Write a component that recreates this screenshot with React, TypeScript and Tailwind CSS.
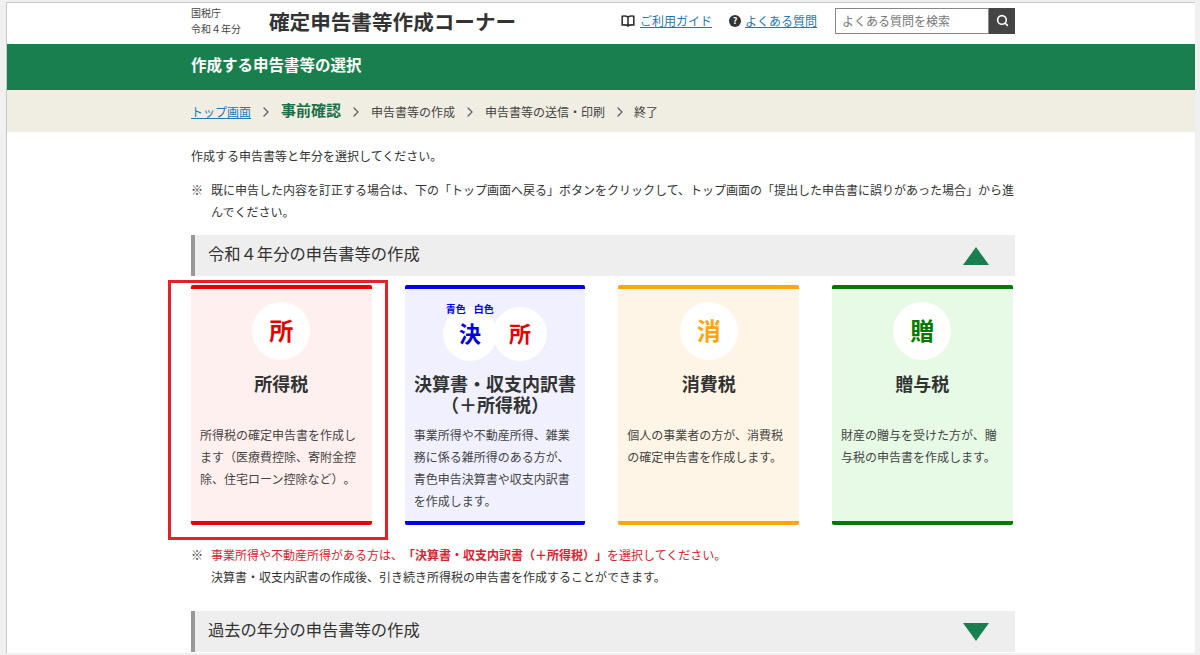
import { ChevronRight, Search } from "lucide-react";

const font = "font-['Noto_Sans_CJK_JP','Liberation_Sans',sans-serif]";

const cards = [
  {
    title: ["所得税"],
    text: "所得税の確定申告書を作成します（医療費控除、寄附金控除、住宅ローン控除など）。",
    bg: "bg-[#fff0f0]",
    bar: "bg-[#e60000]",
    badge: "所",
    badgeColor: "text-[#e60000]",
  },
  {
    title: ["決算書・収支内訳書", "（＋所得税）"],
    text: "事業所得や不動産所得、雑業務に係る雑所得のある方が、青色申告決算書や収支内訳書を作成します。",
    bg: "bg-[#f0f0ff]",
    bar: "bg-[#0000e6]",
    badge: "",
    badgeColor: "",
  },
  {
    title: ["消費税"],
    text: "個人の事業者の方が、消費税の確定申告書を作成します。",
    bg: "bg-[#fff5e6]",
    bar: "bg-[#ffa50f]",
    badge: "消",
    badgeColor: "text-[#ffa50f]",
  },
  {
    title: ["贈与税"],
    text: "財産の贈与を受けた方が、贈与税の申告書を作成します。",
    bg: "bg-[#e6fae6]",
    bar: "bg-[#007a00]",
    badge: "贈",
    badgeColor: "text-[#007a00]",
  },
];

function SectionBar({ label, up }: { label: string; up: boolean }) {
  return (
    <div className="flex h-[41px] items-center justify-between border-l-[4px] border-[#999999] bg-[#eeeeee] pl-[13px] pr-[26px]">
      <span className="mb-[4px] text-[16.3px] text-[#333333]">{label}</span>
      <svg width="26" height="18" viewBox="0 0 26 18">
        <polygon points={up ? "13,0 26,18 0,18" : "0,0 26,0 13,18"} fill="#1a7f4e" />
      </svg>
    </div>
  );
}

function Sep({ narrow }: { narrow?: boolean }) {
  return (
    <span className={`flex justify-center ${narrow ? "w-[29px]" : "w-[30px]"}`}>
      <ChevronRight size={16} strokeWidth={2} className="text-[#666666]" />
    </span>
  );
}

function Card({ card }: { card: (typeof cards)[number] }) {
  const double = card.title.length > 1;
  return (
    <div className={`flex h-[240px] w-[180.67px] flex-col rounded-[2px] ${card.bg}`}>
      <div className={`h-[4px] rounded-t-[2px] ${card.bar}`} />
      {double ? (
        <div className="relative mt-[18px] flex h-[54px] justify-center">
          <div className="flex h-[54px] w-[54px] items-center justify-center rounded-full bg-white pb-[3px] text-[22px] font-bold text-[#0000e6]">
            決
          </div>
          <div className="ml-[-4px] flex h-[54px] w-[54px] items-center justify-center rounded-full bg-white pb-[3px] text-[22px] font-bold text-[#e60000]">
            所
          </div>
          <span className="absolute left-[41px] top-[-5px] text-[10px] font-bold leading-[14px] text-[#0000e6]">青色</span>
          <span className="absolute left-[69px] top-[-5px] text-[10px] font-bold leading-[14px] text-[#0000e6]">白色</span>
        </div>
      ) : (
        <div className={`mx-auto mt-[13px] flex h-[58px] w-[58px] items-center justify-center rounded-full bg-white pb-[3px] text-[24px] font-bold ${card.badgeColor}`}>
          {card.badge}
        </div>
      )}
      <div className={`text-center text-[18px] font-bold leading-[21px] text-[#333333] ${double ? "mt-[12px] h-[43px]" : "mt-[13px] h-[21px]"}`}>
        {card.title.map((t) => (
          <div key={t}>{t}</div>
        ))}
      </div>
      <p className={`px-[9px] text-[12px] leading-[22px] text-[#444444] ${double ? "mt-[8px]" : "mt-[30px]"}`}>
        {card.text}
      </p>
      <div className={`mt-auto h-[4px] rounded-b-[2px] ${card.bar}`} />
    </div>
  );
}

export default function App() {
  return (
    <div className={`h-[655px] overflow-hidden bg-[#f0f0f0] pb-[2px] pl-[6px] pr-[5px] pt-[2px] [text-spacing-trim:space-all] ${font}`}>
      <div className="h-[651px] overflow-hidden border-l border-t border-[#c8c8c8] bg-white">
        <header className="flex h-[41px] items-center pb-[6px] pl-[184px]">
          <div className="w-[78px] text-[10px] leading-[16px] text-[#444444]">
            <div>国税庁</div>
            <div>令和４年分</div>
          </div>
          <div className="mt-[2px] w-[352px] text-[20.6px] font-bold text-[#333333]">確定申告書等作成コーナー</div>
          <svg width="14" height="12" viewBox="0 0 14 12" fill="none" stroke="#333333" strokeWidth="1.6">
            <path d="M7 2.2C6 1.2 3.5 .9 1.2 1.2V10C3.5 9.7 6 10 7 11C8 10 10.5 9.7 12.8 10V1.2C10.5 .9 8 1.2 7 2.2V11" />
          </svg>
          <a className="ml-[5px] text-[12px] text-[#1f77b4] underline">ご利用ガイド</a>
          <span className="ml-[17px] flex h-[12px] w-[12px] items-center justify-center rounded-full bg-[#333333] text-[9px] font-bold leading-none text-white">?</span>
          <a className="ml-[4px] text-[12px] text-[#1f77b4] underline">よくある質問</a>
          <div className="ml-[18px] flex h-[26px] w-[180px]">
            <div className="flex flex-1 items-center border border-[#888888] pl-[6px] text-[12px] text-[#777777]">よくある質問を検索</div>
            <div className="flex w-[26px] items-center justify-center bg-[#444444]">
              <Search size={13} strokeWidth={3} className="text-white" />
            </div>
          </div>
        </header>
        <div className="flex h-[46px] items-center bg-[#1a7f4e] pb-[5px] pl-[184px] text-[15.5px] font-bold text-white">
          作成する申告書等の選択
        </div>
        <nav className="flex h-[42px] items-center bg-[#f0ede3] pl-[184px] pt-[1px] text-[12px] text-[#444444]">
          <a className="text-[#1f77b4] underline">トップ画面</a>
          <Sep />
          <span className="mb-[2px] text-[15px] font-bold text-[#1a7048]">事前確認</span>
          <Sep />
          <span>申告書等の作成</span>
          <Sep />
          <span>申告書等の送信・印刷</span>
          <Sep narrow />
          <span>終了</span>
        </nav>
        <main className="ml-[184px] w-[824px] text-[12px] text-[#333333]">
          <p className="mt-[13px] leading-[22px]">作成する申告書等と年分を選択してください。</p>
          <div className="mt-[12px] flex leading-[22px]">
            <span className="w-[20px] shrink-0">※</span>
            <p>既に申告した内容を訂正する場合は、下の「トップ画面へ戻る」ボタンをクリックして、トップ画面の「提出した申告書に誤りがあった場合」から進んでください。</p>
          </div>
          <div className="mt-[12px]">
            <SectionBar label="令和４年分の申告書等の作成" up />
          </div>
          <div className="relative mt-[9px] flex gap-[33px]">
            {cards.map((c) => (
              <Card key={c.bar} card={c} />
            ))}
            <div className="absolute left-[-23px] top-[-5px] h-[260px] w-[220px] border-[3px] border-[#e6202a]" />
          </div>
          <div className="mt-[19px] flex leading-[22px]">
            <span className="w-[20px] shrink-0">※</span>
            <div>
              <p className="text-[#d9232e]">
                事業所得や不動産所得がある方は、<b>「決算書・収支内訳書（＋所得税）」</b>を選択してください。
              </p>
              <p>決算書・収支内訳書の作成後、引き続き所得税の申告書を作成することができます。</p>
            </div>
          </div>
          <div className="mt-[23px]">
            <SectionBar label="過去の年分の申告書等の作成" up={false} />
          </div>
        </main>
      </div>
    </div>
  );
}
